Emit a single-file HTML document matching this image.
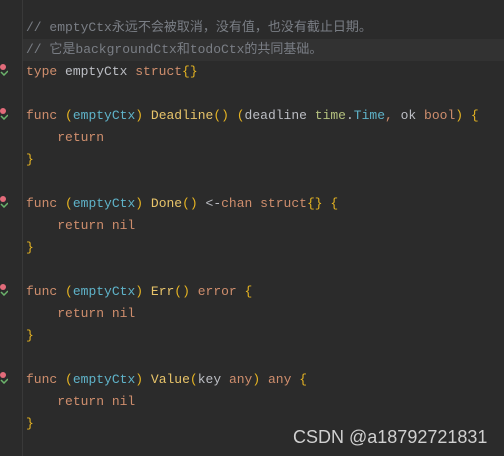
<!DOCTYPE html>
<html><head><meta charset="utf-8"><style>
body{margin:0;width:504px;height:456px;background:#2b2b2b;overflow:hidden;position:relative;font-family:"Liberation Mono","Noto Sans CJK SC",monospace;font-size:13px;}
.gut{position:absolute;left:22px;top:0;width:1px;height:456px;background:#393939}
.hl{position:absolute;left:23px;top:39px;width:481px;height:22px;background:#323232}
.code{position:absolute;left:26px;top:17px;white-space:pre;line-height:22px;color:#bcbec4}
.c{color:#7a7e85}.k{color:#cf8e6d}.t{color:#5fb3c9}.f{color:#e8c46a}.b{color:#e6b422}.p{color:#b3c07e}
.ic{position:absolute;left:0;width:8px;height:12px}
.wm{position:absolute;left:293px;top:427px;font-family:"Liberation Sans",sans-serif;font-size:18px;color:#d0d0d0}
</style></head><body>
<div class="hl"></div><div class="gut"></div>
<svg class="ic" style="top:64px" viewBox="0 0 8 12"><circle cx="3" cy="3" r="3" fill="#e36b7a"/><path d="M1 8l3 3 4-4" stroke="#6cb36c" stroke-width="1.5" fill="none"/></svg>
<svg class="ic" style="top:108px" viewBox="0 0 8 12"><circle cx="3" cy="3" r="3" fill="#e36b7a"/><path d="M1 8l3 3 4-4" stroke="#6cb36c" stroke-width="1.5" fill="none"/></svg>
<svg class="ic" style="top:196px" viewBox="0 0 8 12"><circle cx="3" cy="3" r="3" fill="#e36b7a"/><path d="M1 8l3 3 4-4" stroke="#6cb36c" stroke-width="1.5" fill="none"/></svg>
<svg class="ic" style="top:284px" viewBox="0 0 8 12"><circle cx="3" cy="3" r="3" fill="#e36b7a"/><path d="M1 8l3 3 4-4" stroke="#6cb36c" stroke-width="1.5" fill="none"/></svg>
<svg class="ic" style="top:372px" viewBox="0 0 8 12"><circle cx="3" cy="3" r="3" fill="#e36b7a"/><path d="M1 8l3 3 4-4" stroke="#6cb36c" stroke-width="1.5" fill="none"/></svg>
<div class="code"><span class="c">// emptyCtx永远不会被取消，没有值，也没有截止日期。</span>
<span class="c">// 它是backgroundCtx和todoCtx的共同基础。</span>
<span class="k">type</span> emptyCtx <span class="k">struct</span><span class="b">{}</span>

<span class="k">func</span> <span class="b">(</span><span class="t">emptyCtx</span><span class="b">)</span> <span class="f">Deadline</span><span class="b">()</span> <span class="b">(</span>deadline <span class="p">time</span>.<span class="t">Time</span><span class="k">,</span> ok <span class="k">bool</span><span class="b">)</span> <span class="b">{</span>
    <span class="k">return</span>
<span class="b">}</span>

<span class="k">func</span> <span class="b">(</span><span class="t">emptyCtx</span><span class="b">)</span> <span class="f">Done</span><span class="b">()</span> &lt;-<span class="k">chan struct</span><span class="b">{}</span> <span class="b">{</span>
    <span class="k">return nil</span>
<span class="b">}</span>

<span class="k">func</span> <span class="b">(</span><span class="t">emptyCtx</span><span class="b">)</span> <span class="f">Err</span><span class="b">()</span> <span class="k">error</span> <span class="b">{</span>
    <span class="k">return nil</span>
<span class="b">}</span>

<span class="k">func</span> <span class="b">(</span><span class="t">emptyCtx</span><span class="b">)</span> <span class="f">Value</span><span class="b">(</span>key <span class="k">any</span><span class="b">)</span> <span class="k">any</span> <span class="b">{</span>
    <span class="k">return nil</span>
<span class="b">}</span></div>
<div class="wm">CSDN @a18792721831</div>
</body></html>
